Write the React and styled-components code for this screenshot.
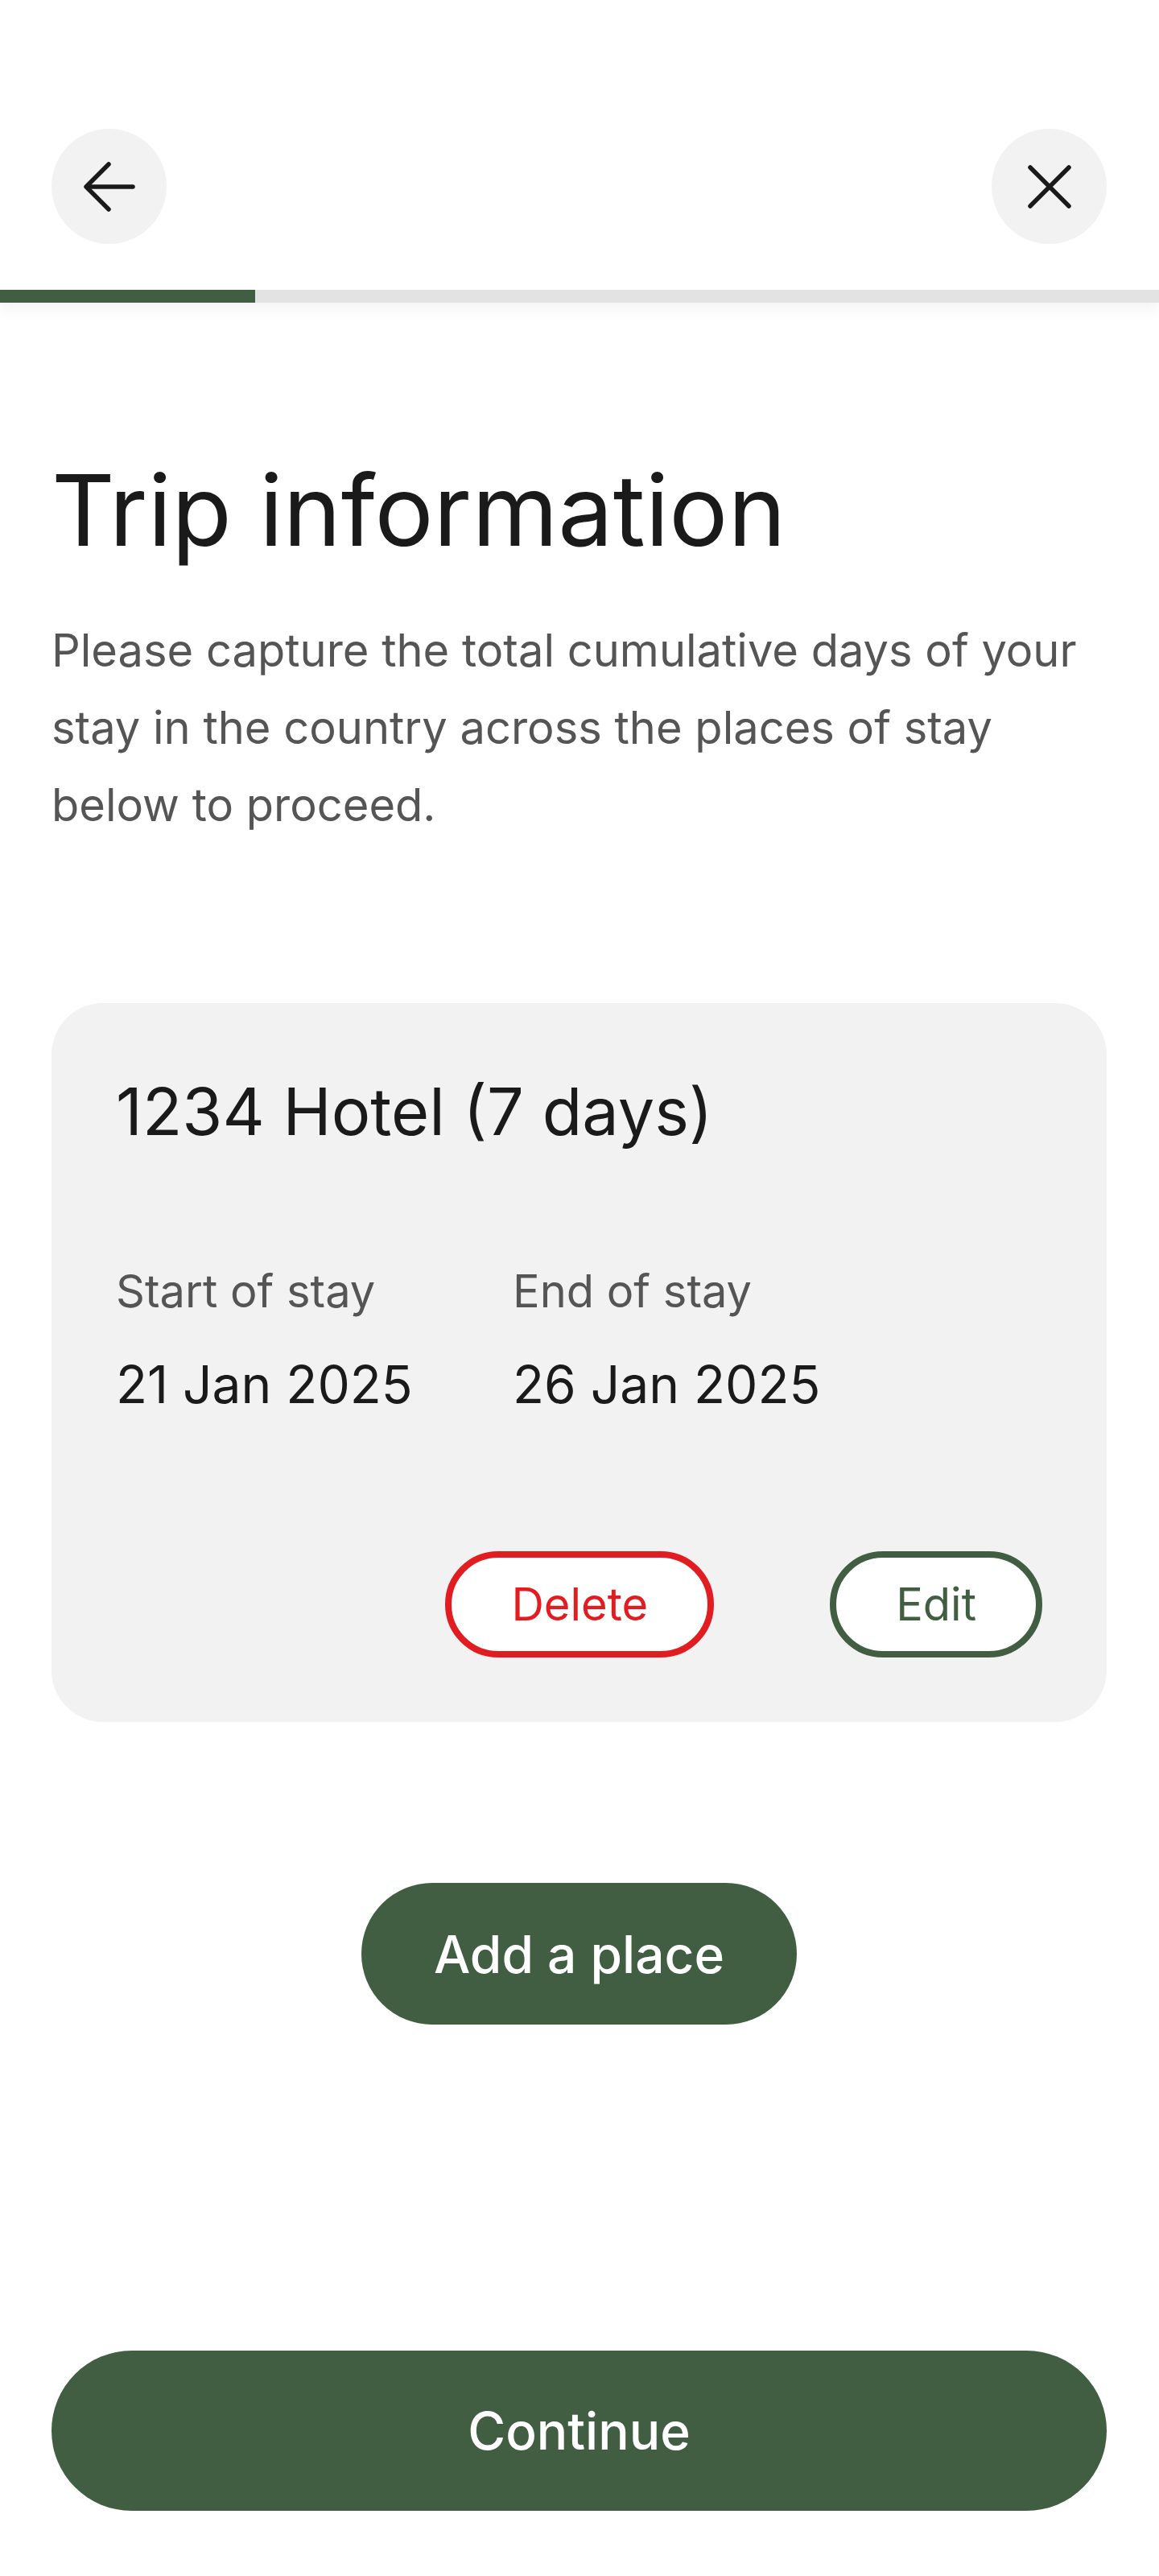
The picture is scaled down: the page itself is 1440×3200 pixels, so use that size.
import React from "react";
import styled, { createGlobalStyle } from "styled-components";

const GlobalStyle = createGlobalStyle`
    * {
        box-sizing: border-box;
    }
    body {
        margin: 0;
        background: #ffffff;
        font-family: Inter, "Noto Sans", sans-serif;
        color: #1a1a1a;
    }
`;

const Page = styled.div`
    display: flex;
    flex-direction: column;
    min-height: 3200px;
    width: 1440px;
`;

const Header = styled.header`
    box-shadow: 0 8px 18px rgba(0, 0, 0, 0.05);
`;

const Toolbar = styled.div`
    display: flex;
    justify-content: space-between;
    align-items: center;
    padding: 160px 65px 57px 64px;
`;

const RoundButton = styled.button`
    display: flex;
    align-items: center;
    justify-content: center;
    width: 143px;
    height: 143px;
    border: none;
    border-radius: 50%;
    background-color: #f2f2f2;
    padding: 0;
    cursor: pointer;
`;

const Progress = styled.div`
    height: 16px;
    background-color: #e3e3e3;
`;

const ProgressFill = styled.div`
    height: 100%;
    background-color: #415e42;
`;

const Content = styled.main`
    padding: 186px 65px 0 64px;
`;

const Title = styled.h1`
    margin: 0;
    font-size: 122px;
    line-height: 144px;
    font-weight: 400;
    color: #1a1a1a;
`;

const Intro = styled.p`
    margin: 54px 0 0;
    font-size: 56px;
    line-height: 96px;
    color: #555555;
`;

const Card = styled.section`
    margin-top: 198px;
    padding: 80px;
    border-radius: 64px;
    background-color: #f2f2f2;
`;

const CardTitle = styled.h2`
    margin: 0;
    font-size: 81px;
    line-height: 111px;
    font-weight: 400;
    color: #1a1a1a;
`;

const DateRow = styled.div`
    display: grid;
    grid-template-columns: 493px auto;
    margin-top: 131px;
`;

const DateLabel = styled.div`
    font-size: 56px;
    line-height: 72px;
    color: #555555;
`;

const DateValue = styled.div`
    margin-top: 44px;
    font-size: 64px;
    line-height: 72px;
    color: #1a1a1a;
`;

const Actions = styled.div`
    display: flex;
    justify-content: flex-end;
    gap: 144px;
    margin-top: 171px;
`;

const OutlineButton = styled.button`
    height: 132px;
    padding: 0 74px;
    border: 8px solid ${(props) => (props.danger ? "#e11d21" : "#415e42")};
    border-radius: 66px;
    background-color: #ffffff;
    color: ${(props) => (props.danger ? "#e11d21" : "#415e42")};
    font-family: inherit;
    font-size: 56px;
    cursor: pointer;
`;

const AddRow = styled.div`
    display: flex;
    justify-content: center;
    margin-top: 200px;
`;

const FilledButton = styled.button`
    height: ${(props) => (props.wide ? "199px" : "176px")};
    width: ${(props) => (props.wide ? "100%" : "auto")};
    padding: 0 90px;
    border: none;
    border-radius: 100px;
    background-color: #415e42;
    color: #ffffff;
    font-family: inherit;
    font-size: 64px;
    font-weight: 500;
    cursor: pointer;
`;

const Footer = styled.footer`
    margin-top: auto;
    padding: 0 65px 81px 64px;
`;

function BackIcon() {
    return (
        <svg width="64" height="64" viewBox="0 0 64 64" fill="none" stroke="#1a1a1a" strokeWidth="5.5" strokeLinecap="round" strokeLinejoin="round">
            <path d="M61 32H4" />
            <path d="M31 4L3 32l28 28" />
        </svg>
    );
}

function CloseIcon() {
    return (
        <svg width="56" height="56" viewBox="0 0 56 56" fill="none" stroke="#1a1a1a" strokeWidth="5.5" strokeLinecap="round">
            <path d="M4 4l48 48" />
            <path d="M52 4L4 52" />
        </svg>
    );
}

export default function App() {
    return (
        <Page>
            <GlobalStyle />
            <Header>
                <Toolbar>
                    <RoundButton aria-label="Back">
                        <BackIcon />
                    </RoundButton>
                    <RoundButton aria-label="Close">
                        <CloseIcon />
                    </RoundButton>
                </Toolbar>
                <Progress>
                    <ProgressFill style={{ width: "22%" }} />
                </Progress>
            </Header>

            <Content>
                <Title>Trip information</Title>
                <Intro>
                    Please capture the total cumulative days of your stay in the country across the places of stay below to proceed.
                </Intro>

                <Card>
                    <CardTitle>1234 Hotel (7 days)</CardTitle>
                    <DateRow>
                        <div>
                            <DateLabel>Start of stay</DateLabel>
                            <DateValue>21 Jan 2025</DateValue>
                        </div>
                        <div>
                            <DateLabel>End of stay</DateLabel>
                            <DateValue>26 Jan 2025</DateValue>
                        </div>
                    </DateRow>
                    <Actions>
                        <OutlineButton danger>Delete</OutlineButton>
                        <OutlineButton>Edit</OutlineButton>
                    </Actions>
                </Card>

                <AddRow>
                    <FilledButton>Add a place</FilledButton>
                </AddRow>
            </Content>

            <Footer>
                <FilledButton wide>Continue</FilledButton>
            </Footer>
        </Page>
    );
}
